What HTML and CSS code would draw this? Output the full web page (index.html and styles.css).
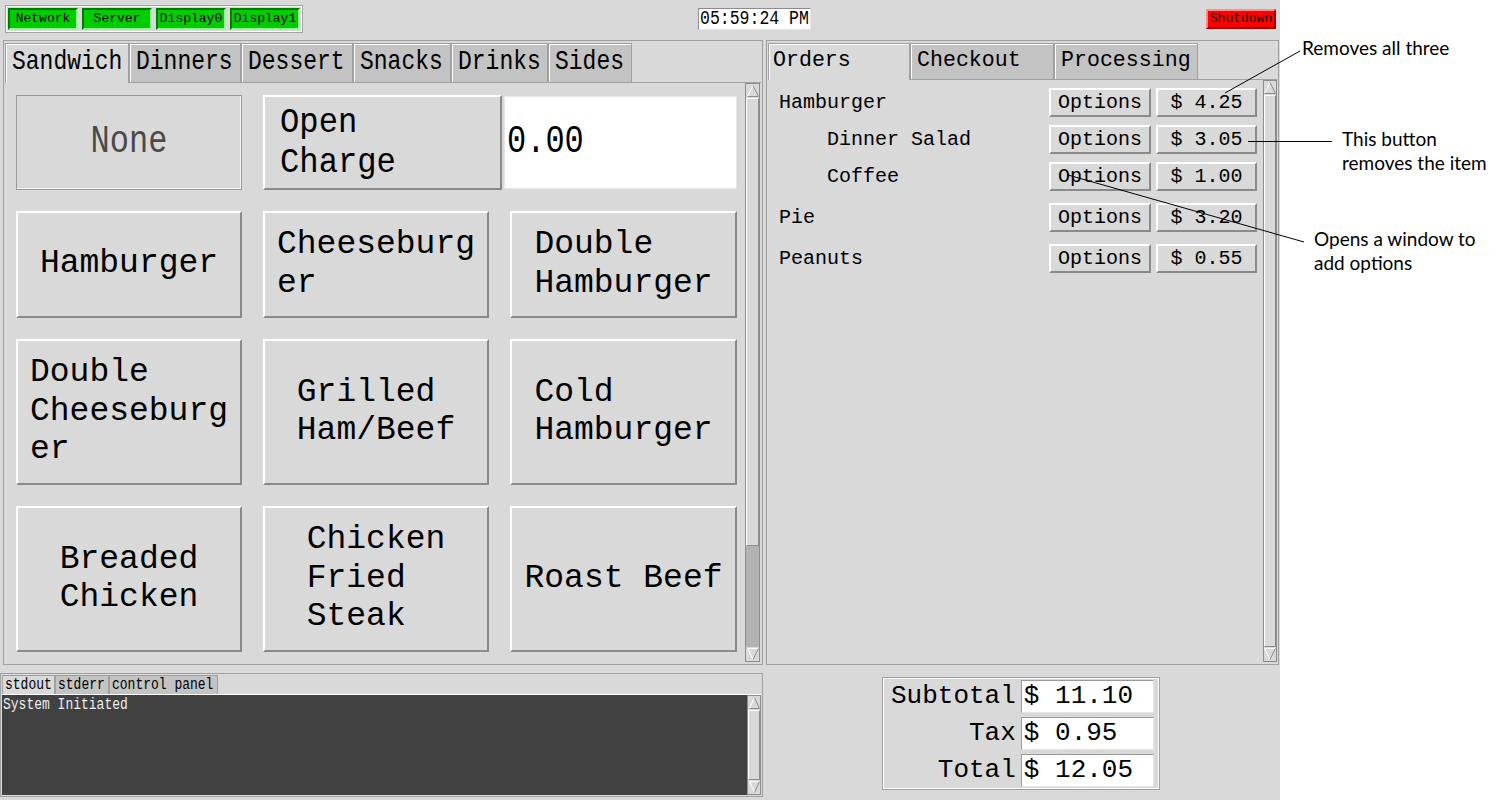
FILE: index.html
```html
<!DOCTYPE html>
<html>
<head>
<meta charset="utf-8">
<title>POS</title>
<link rel="stylesheet" href="styles.css">
</head>
<body>
<div class="page">
  <div class="app">
    <div class="topbar">
      <div class="status-box">
        <div class="stat">Network</div>
        <div class="stat">Server</div>
        <div class="stat">Display0</div>
        <div class="stat">Display1</div>
      </div>
      <div class="clock"><span class="cond">05:59:24 PM</span></div>
      <div class="shutdown">Shutdown</div>
    </div>

    <div class="main">
      <section class="menu-panel">
        <div class="tabs">
          <div class="tab sel w-sand"><span class="cond">Sandwich</span></div>
          <div class="tab w-din"><span class="cond">Dinners</span></div>
          <div class="tab w-des"><span class="cond">Dessert</span></div>
          <div class="tab w-sna"><span class="cond">Snacks</span></div>
          <div class="tab w-dri"><span class="cond">Drinks</span></div>
          <div class="tab w-sid"><span class="cond">Sides</span></div>
        </div>
        <div class="menu-body">
          <div class="menu-grid">
            <div class="mbtn none"><span class="cond big">None</span></div>
            <div class="open-row">
              <div class="mbtn open">
                <div class="lines"><span class="narrow">Open</span><span class="narrow">Charge</span></div>
              </div>
              <div class="entry-big"><span class="cond big">0.00</span></div>
            </div>
            <div class="mbtn"><span class="lbl">Hamburger</span></div>
            <div class="mbtn"><span class="lbl">Cheeseburg<br>er</span></div>
            <div class="mbtn"><span class="lbl">Double<br>Hamburger</span></div>
            <div class="mbtn"><span class="lbl">Double<br>Cheeseburg<br>er</span></div>
            <div class="mbtn"><span class="lbl">Grilled<br>Ham/Beef</span></div>
            <div class="mbtn"><span class="lbl">Cold<br>Hamburger</span></div>
            <div class="mbtn"><span class="lbl">Breaded<br>Chicken</span></div>
            <div class="mbtn"><span class="lbl">Chicken<br>Fried<br>Steak</span></div>
            <div class="mbtn"><span class="lbl">Roast Beef</span></div>
          </div>
          <div class="vscroll menu-scroll">
            <div class="arrow"><svg width="12" height="12" viewBox="0 0 12 12"><path d="M0.5 11.5L6 0.5" stroke="#fff" fill="none"/><path d="M6 0.5L11.5 11.5H0.5" stroke="#8c8c8c" fill="none"/></svg></div>
            <div class="slider"></div>
            <div class="trough"></div>
            <div class="arrow"><svg width="12" height="12" viewBox="0 0 12 12"><path d="M0.5 0.5H11.5" stroke="#fff" fill="none"/><path d="M0.5 0.5L6 11.5" stroke="#fff" fill="none"/><path d="M6 11.5L11.5 0.5" stroke="#8c8c8c" fill="none"/></svg></div>
          </div>
        </div>
      </section>

      <section class="order-panel">
        <div class="otabs">
          <div class="otab sel w-ord">Orders</div>
          <div class="otab w-chk">Checkout</div>
          <div class="otab w-pro">Processing</div>
        </div>
        <div class="order-body">
          <div class="order-list">
            <div class="group">
              <div class="orow"><span class="name">Hamburger</span><div class="obtn opt">Options</div><div class="obtn price">$ 4.25</div></div>
              <div class="orow sub"><span class="name">Dinner Salad</span><div class="obtn opt">Options</div><div class="obtn price">$ 3.05</div></div>
              <div class="orow sub"><span class="name">Coffee</span><div class="obtn opt">Options</div><div class="obtn price">$ 1.00</div></div>
            </div>
            <div class="group">
              <div class="orow"><span class="name">Pie</span><div class="obtn opt">Options</div><div class="obtn price">$ 3.20</div></div>
            </div>
            <div class="group">
              <div class="orow"><span class="name">Peanuts</span><div class="obtn opt">Options</div><div class="obtn price">$ 0.55</div></div>
            </div>
          </div>
          <div class="vscroll order-scroll">
            <div class="arrow"><svg width="12" height="12" viewBox="0 0 12 12"><path d="M0.5 11.5L6 0.5" stroke="#fff" fill="none"/><path d="M6 0.5L11.5 11.5H0.5" stroke="#8c8c8c" fill="none"/></svg></div>
            <div class="slider grow"></div>
            <div class="arrow"><svg width="12" height="12" viewBox="0 0 12 12"><path d="M0.5 0.5H11.5" stroke="#fff" fill="none"/><path d="M0.5 0.5L6 11.5" stroke="#fff" fill="none"/><path d="M6 11.5L11.5 0.5" stroke="#8c8c8c" fill="none"/></svg></div>
          </div>
        </div>
      </section>
    </div>

    <div class="bottom">
      <section class="console">
        <div class="ctabs">
          <div class="ctab sel w-out"><span class="cond">stdout</span></div>
          <div class="ctab w-err"><span class="cond">stderr</span></div>
          <div class="ctab w-cp"><span class="cond">control panel</span></div>
        </div>
        <div class="cbody">
          <div class="cout"><span class="cond">System Initiated</span></div>
          <div class="vscroll console-scroll">
            <div class="arrow"><svg width="11" height="12" viewBox="0 0 11 12"><path d="M0.5 11.5L5.5 0.5" stroke="#fff" fill="none"/><path d="M5.5 0.5L10.5 11.5H0.5" stroke="#8c8c8c" fill="none"/></svg></div>
            <div class="slider grow"></div>
            <div class="arrow"><svg width="11" height="12" viewBox="0 0 11 12"><path d="M0.5 0.5H10.5" stroke="#fff" fill="none"/><path d="M0.5 0.5L5.5 11.5" stroke="#fff" fill="none"/><path d="M5.5 11.5L10.5 0.5" stroke="#8c8c8c" fill="none"/></svg></div>
          </div>
        </div>
      </section>

      <div class="totals">
        <div class="tlabel">Subtotal</div><div class="tval">$ 11.10</div>
        <div class="tlabel">Tax</div><div class="tval">$ 0.95</div>
        <div class="tlabel">Total</div><div class="tval">$ 12.05</div>
      </div>
    </div>
  </div>

  <div class="notes">
    <div class="note n1">Removes all three</div>
    <div class="note n2">This button<br>removes the item</div>
    <div class="note n3">Opens a window to<br>add options</div>
  </div>

  <svg class="callouts" width="1498" height="800" viewBox="0 0 1498 800">
    <line x1="1300" y1="51" x2="1225" y2="93" stroke="#000" stroke-width="1"/>
    <line x1="1248" y1="141.5" x2="1332" y2="141.5" stroke="#000" stroke-width="1"/>
    <line x1="1068" y1="175" x2="1304" y2="242" stroke="#000" stroke-width="1"/>
  </svg>
</div>
</body>
</html>
```

FILE: styles.css
```css
* { box-sizing: border-box; }
html, body { margin: 0; padding: 0; }
body {
  width: 1498px;
  height: 800px;
  overflow: hidden;
  background: #ffffff;
  font-family: "Liberation Mono", "DejaVu Sans Mono", monospace;
  color: #000;
}
.page { position: relative; display: flex; width: 1498px; height: 800px; }
.app {
  width: 1280px;
  height: 800px;
  background: #d9d9d9;
  display: flex;
  flex-direction: column;
}
.cond { display: inline-block; transform: scaleY(1.2); }
.narrow {
  display: inline-block;
  font-size: 35px;
  line-height: 40px;
  transform: scaleX(0.92);
  transform-origin: left center;
}

/* top bar */
.topbar { height: 40px; flex: none; display: flex; align-items: flex-start; }
.status-box {
  margin: 5px 0 0 5px;
  width: 298px;
  height: 28px;
  border: 1px solid #a3a3a3;
  box-shadow: inset 0 0 0 1px #fff;
  padding: 2px;
  display: flex;
  gap: 4px;
}
.stat {
  width: 70px;
  height: 22px;
  border: 2px solid;
  border-color: #007a00 #8cff8c #8cff8c #007a00;
  background: #00cc00;
  font-size: 13px;
  line-height: 18px;
  text-align: center;
}
.clock {
  margin: 8px 0 0 395px;
  width: 113px;
  height: 22px;
  background: #fff;
  border: 1px solid;
  border-color: #8c8c8c #e4e4e4 #e4e4e4 #8c8c8c;
  font-size: 16.5px;
  line-height: 20px;
  padding-left: 1px;
  white-space: nowrap;
  overflow: hidden;
}
.clock .cond { line-height: 16px; }
.shutdown {
  margin: 9px 4px 0 auto;
  width: 70px;
  height: 20px;
  background: #ff0000;
  border: 2px solid;
  border-color: #ff8a8a #a00000 #a00000 #ff8a8a;
  font-size: 13px;
  line-height: 16px;
  text-align: center;
}

/* main */
.main { display: flex; height: 625px; flex: none; }
.menu-panel {
  margin-left: 3px;
  width: 760px;
  height: 625px;
  border: 1px solid #a0a0a0;
  padding: 2px 1px 1px;
  display: flex;
  flex-direction: column;
}
.tabs { display: flex; height: 39px; flex: none; position: relative; z-index: 1; }
.tab {
  height: 39px;
  border: 1px solid #a0a0a0;
  border-bottom: 0;
  box-shadow: inset 1px 1px 0 #fff;
  background: #c3c3c3;
  padding-left: 6px;
  font-size: 23px;
  line-height: 37px;
  white-space: nowrap;
}
.tab .cond { line-height: 26px; }
.tab.sel { background: #d9d9d9; height: 40px; }
.w-sand { width: 124px; }
.w-din { width: 112px; }
.w-des { width: 112px; }
.w-sna { width: 98px; }
.w-dri { width: 97px; }
.w-sid { width: 84px; }

.menu-body { flex: 1; display: flex; border-top: 1px solid #a0a0a0; min-height: 0; }
.menu-grid {
  margin: 12px 0 0 11px;
  display: grid;
  grid-template-columns: 226px 226px 227px;
  grid-template-rows: 95px 107px 146px 146px;
  gap: 21px;
  align-content: start;
}
.open-row { grid-column: 2 / span 2; display: flex; gap: 2px; }
.mbtn {
  border: 2px solid;
  border-color: #fff #8a8a8a #8a8a8a #fff;
  display: flex;
  align-items: center;
  justify-content: center;
  font-size: 33px;
  line-height: 38.5px;
}
.mbtn .lbl { display: block; text-align: left; white-space: nowrap; }
.big { font-size: 32px; line-height: 32.5px; }
.lines { display: flex; flex-direction: column; align-items: flex-start; }
.mbtn.none { border: 1px solid #9a9a9a; box-shadow: inset -1px -1px 0 #f4f4f4; color: #4a4a4a; }
.mbtn.open { width: 239px; justify-content: flex-start; padding-left: 15px; }
.entry-big {
  flex: 1;
  background: #fff;
  margin: 1px 0;
  border: 1px solid #e6e6e6;
  display: flex;
  align-items: center;
  padding-left: 2px;
}

/* scrollbars */
.vscroll {
  flex: none;
  width: 15px;
  border: 1px solid #8c8c8c;
  background: #b3b3b3;
  display: flex;
  flex-direction: column;
}
.arrow {
  flex: none;
  height: 14px;
  background: #d9d9d9;
  display: flex;
  align-items: center;
  justify-content: center;
}
.slider {
  flex: none;
  background: #d9d9d9;
  border: 1px solid;
  border-color: #fff #8c8c8c #8c8c8c #fff;
}
.slider.grow { flex: 1; }
.trough { flex: 1; }
.menu-scroll { margin: 0 1px 1px 8px; }
.menu-scroll .slider { height: 448px; }

/* orders */
.order-panel {
  margin-left: 3px;
  width: 513px;
  height: 625px;
  border: 1px solid #a0a0a0;
  padding: 2px 1px 1px;
  display: flex;
  flex-direction: column;
}
.otabs { display: flex; height: 36px; flex: none; position: relative; z-index: 1; }
.otab {
  height: 36px;
  border: 1px solid #a0a0a0;
  border-bottom: 0;
  box-shadow: inset 1px 1px 0 #fff;
  background: #c3c3c3;
  padding-left: 6px;
  font-size: 21.6px;
  line-height: 33px;
  white-space: nowrap;
}
.otab.sel { background: #d9d9d9; height: 37px; padding-left: 4px; }
.w-ord { width: 142px; }
.w-chk { width: 144px; }
.w-pro { width: 144px; }
.order-body { flex: 1; display: flex; border-top: 1px solid #a0a0a0; min-height: 0; }
.order-list {
  flex: 1;
  padding: 8px 6px 0 11px;
  display: flex;
  flex-direction: column;
  gap: 12px;
}
.group { display: flex; flex-direction: column; gap: 8px; }
.orow { display: flex; align-items: center; height: 29px; font-size: 20px; }
.orow .name { flex: 1; white-space: pre; }
.orow.sub .name { padding-left: 48px; }
.obtn {
  height: 29px;
  border: 2px solid;
  border-color: #fff #8a8a8a #8a8a8a #fff;
  display: flex;
  align-items: center;
  justify-content: center;
  white-space: pre;
}
.obtn.opt { width: 102px; margin-right: 5px; }
.obtn.price { width: 101px; }
.order-scroll { width: 14px; margin: 0 0 1px 0; }

/* bottom */
.bottom { flex: 1; display: flex; align-items: flex-start; }
.console {
  margin-top: 8px;
  width: 763px;
  height: 124px;
  border: 1px solid #a0a0a0;
  padding: 1px;
  display: flex;
  flex-direction: column;
}
.ctabs { display: flex; height: 19px; flex: none; }
.ctab {
  height: 19px;
  border: 1px solid #a0a0a0;
  border-bottom: 0;
  background: #c3c3c3;
  padding-left: 2px;
  font-size: 13px;
  line-height: 17px;
  white-space: pre;
}
.ctab .cond { line-height: 13px; }
.ctab.sel { background: #d9d9d9; }
.w-out { width: 53px; }
.w-err { width: 54px; }
.w-cp { width: 109px; }
.cbody { flex: 1; display: flex; border-top: 1px solid #fff; }
.cout {
  flex: 1;
  background: #414141;
  color: #ededed;
  font-size: 13px;
  line-height: 17px;
  padding: 1px 1px;
  white-space: pre;
}
.cout .cond { line-height: 13px; }
.console-scroll { width: 14px; }

.totals {
  margin: 12px 0 0 119px;
  width: 278px;
  height: 113px;
  border: 1px solid #a0a0a0;
  box-shadow: inset 0 0 0 1px #fff;
  padding: 2px 6px 2px 8px;
  display: grid;
  grid-template-columns: 1fr 133px;
  grid-auto-rows: 33px;
  row-gap: 4px;
  column-gap: 5px;
  font-size: 26px;
}
.tlabel { text-align: right; line-height: 33px; }
.tval {
  background: #fff;
  border: 1px solid;
  border-color: #9a9a9a #e6e6e6 #e6e6e6 #9a9a9a;
  line-height: 31px;
  padding-left: 2px;
  white-space: pre;
}

/* notes */
.notes {
  width: 218px;
  height: 800px;
  background: #fff;
  font-family: Lato, "Open Sans", sans-serif;
  font-size: 19px;
  line-height: 24px;
  color: #000;
}
.note { white-space: nowrap; }
.n1 { margin: 36px 0 0 22px; }
.n2 { margin: 66.5px 0 0 62px; }
.n3 { margin: 52px 0 0 34px; }

.callouts { position: absolute; left: 0; top: 0; pointer-events: none; }
```
